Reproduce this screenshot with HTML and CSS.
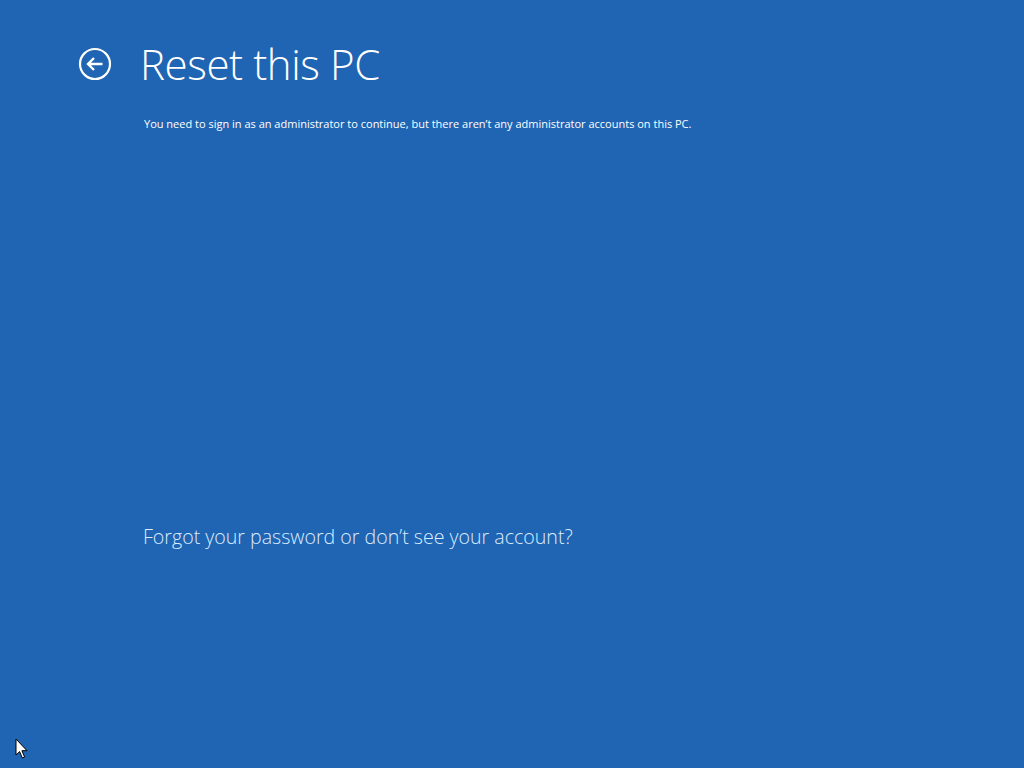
FILE: index.html
```html
<!DOCTYPE html>
<html>
<head>
<meta charset="utf-8">
<title>Reset this PC</title>
<link rel="stylesheet" href="styles.css">
</head>
<body>
<div class="screen">
    <div class="header">
        <button class="back" aria-label="Back">
            <svg width="34" height="34" viewBox="0 0 34 34">
                <circle cx="17" cy="17" r="15" fill="none" stroke="#fff" stroke-width="2.2"/>
                <path d="M24.5 17H10M16 11L10 17L16 23" fill="none" stroke="#fff" stroke-width="2.4"/>
            </svg>
        </button>
        <h1 class="title">Reset this PC</h1>
    </div>
    <p class="message">You need to sign in as an administrator to continue, but there aren’t any administrator accounts on this PC.</p>
    <a class="link" href="#">Forgot your password or don’t see your account?</a>
</div>
<svg class="cursor" width="14" height="22" viewBox="0 0 14 22">
    <path d="M1 1V17L4.6 13.6L7.4 20L9.6 19L6.9 12.7H12Z" fill="#fff" stroke="#000" stroke-width="1"/>
</svg>
</body>
</html>
```

FILE: styles.css
```css
*{
    margin: 0;
    padding: 0;
}
html, body{
    height: 100%;
}
body{
    background-color: #1f65b3;
    font-family: "Open Sans", "Noto Sans", sans-serif;
    color: #fff;
    overflow: hidden;
}
.screen{
    padding: 37px 0 0 78px;
    display: flex;
    flex-direction: column;
}
.header{
    display: flex;
    align-items: center;
    gap: 28px;
}
.back{
    background: none;
    border: none;
    width: 34px;
    height: 34px;
    display: flex;
}
.title{
    font-weight: 300;
    font-size: 42px;
    line-height: 54px;
    letter-spacing: -0.4px;
}
.message{
    margin: 25px 0 0 66px;
    font-size: 11px;
    line-height: 16px;
}
.link{
    margin: 391px 0 0 65px;
    font-size: 19.6px;
    font-weight: 300;
    color: #dcecff;
    text-decoration: none;
    align-self: flex-start;
}
.cursor{
    position: absolute;
    left: 15px;
    top: 738px;
}
```
